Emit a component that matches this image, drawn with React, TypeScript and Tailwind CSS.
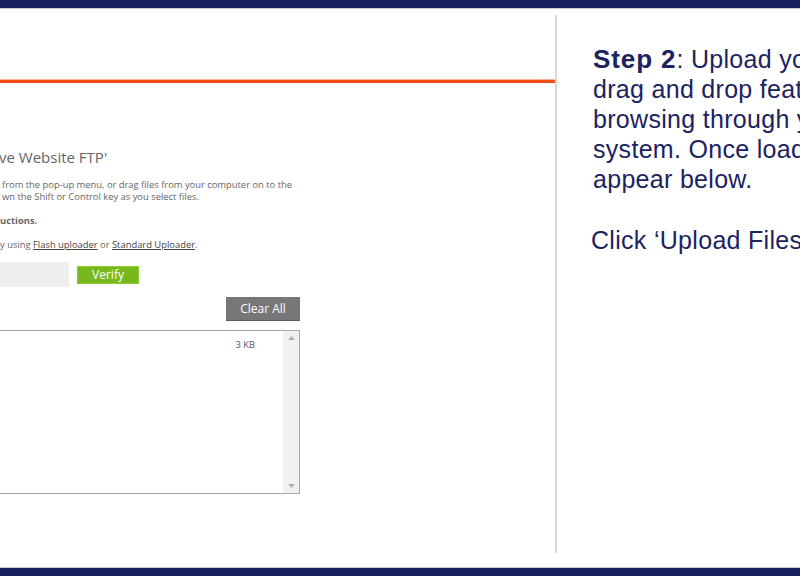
import React from "react";

export default function App() {
  const seg = { fontFamily: '"Open Sans", "Noto Sans", sans-serif' };
  return (
    <div className="w-[800px] h-[576px] overflow-hidden bg-white flex flex-col">
      <div className="h-[8px] bg-[#18205e] shrink-0" />
      <div className="h-[1px] bg-[#c8cad6] shrink-0" />
      <div className="flex-1 flex min-h-0">
        {/* left */}
        <div className="w-[555px] shrink-0 flex flex-col" style={seg}>
          <div className="h-[70px]" />
          <div className="h-[1px] bg-[#fbb49a]" />
          <div className="h-[3px] bg-[#f24d17]" />
          <div className="w-[300px] mt-[64px] text-[#666]">
            <div className="text-[15px] leading-[20px] -ml-[1px] whitespace-nowrap">ve Website FTP'</div>
            <div className="mt-[12px] text-[9.4px] leading-[12px] whitespace-nowrap pl-[2px]">
              <div>from the pop-up menu, or drag files from your computer on to the</div>
              <div>wn the Shift or Control key as you select files.</div>
            </div>
            <div className="mt-[12px] text-[9.4px] leading-[12px] font-bold whitespace-nowrap">uctions.</div>
            <div className="mt-[12px] text-[9.4px] leading-[12px] whitespace-nowrap">
              y using <span className="underline text-[#444]">Flash uploader</span> or{" "}
              <span className="underline text-[#444]">Standard Uploader</span>.
            </div>
            <div className="mt-[11px] flex items-center">
              <div className="w-[69px] h-[25px] bg-[#efefef]" />
              <div className="ml-[8px] w-[62px] h-[18px] bg-[#77b81e] border border-[#8ccc2c] text-white text-[12px] leading-[16px] flex items-center justify-center">
                Verify
              </div>
            </div>
            <div className="mt-[10px] flex justify-end">
              <div className="w-[74px] h-[24px] bg-[#777] border-b border-[#5a5a5a] text-white text-[12px] flex items-center justify-center">
                Clear All
              </div>
            </div>
            <div className="mt-[9px] h-[164px] border border-l-0 border-[#a8a8a8] flex">
              <div className="flex-1 flex justify-end pr-[28px] pt-[8px]">
                <span className="text-[9.4px] leading-[12px] text-[#555]">3 KB</span>
              </div>
              <div className="w-[16px] bg-[#f0f0f0] flex flex-col justify-between items-center py-[5px]">
                <svg width="7" height="4" viewBox="0 0 7 4"><path d="M3.5 0L7 4H0z" fill="#b0b0b0" /></svg>
                <svg width="7" height="4" viewBox="0 0 7 4"><path d="M0 0H7L3.5 4z" fill="#b0b0b0" /></svg>
              </div>
            </div>
          </div>
        </div>
        {/* divider */}
        <div className="w-[2px] bg-[#d9d9d9] mt-[6px] mb-[14px] shrink-0" />
        {/* right */}
        <div
          className="flex-1 pl-[36px] pt-[35px] text-[#1b2360] text-[25px] leading-[30px] tracking-[0.3px] whitespace-nowrap overflow-hidden"
          style={{ fontFamily: '"Liberation Sans", Arial, sans-serif' }}
        >
          <div><b className="text-[26px] tracking-[0.9px]">Step 2</b>: Upload your files using the</div>
          <div>drag and drop feature or by</div>
          <div>browsing through your file</div>
          <div>system. Once loaded, files will</div>
          <div>appear below.</div>
          <div className="mt-[31px] -ml-[2px]">Click ‘Upload Files’</div>
        </div>
      </div>
      <div className="h-[1px] bg-[#c8cad6] shrink-0" />
      <div className="h-[8px] bg-[#18205e] shrink-0" />
    </div>
  );
}
